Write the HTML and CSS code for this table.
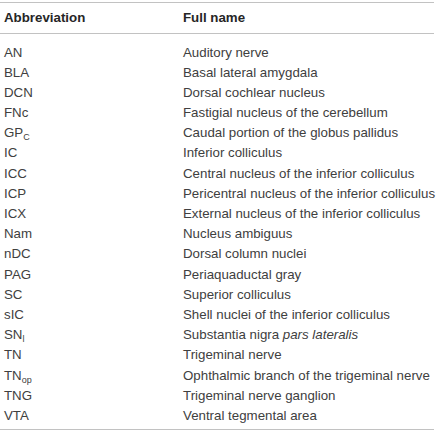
FILE: index.html
```html
<!DOCTYPE html>
<html>
<head>
<meta charset="utf-8">
<link rel="stylesheet" href="styles.css">
</head>
<body>
<div class="tbl">
  <div class="row head"><div class="c1">Abbreviation</div><div class="c2">Full name</div></div>
  <div class="body">
    <div class="row"><div class="c1">AN</div><div class="c2">Auditory nerve</div></div>
    <div class="row"><div class="c1">BLA</div><div class="c2">Basal lateral amygdala</div></div>
    <div class="row"><div class="c1">DCN</div><div class="c2">Dorsal cochlear nucleus</div></div>
    <div class="row"><div class="c1">FNc</div><div class="c2">Fastigial nucleus of the cerebellum</div></div>
    <div class="row"><div class="c1">GP<sub>C</sub></div><div class="c2">Caudal portion of the globus pallidus</div></div>
    <div class="row"><div class="c1">IC</div><div class="c2">Inferior colliculus</div></div>
    <div class="row"><div class="c1">ICC</div><div class="c2">Central nucleus of the inferior colliculus</div></div>
    <div class="row"><div class="c1">ICP</div><div class="c2">Pericentral nucleus of the inferior colliculus</div></div>
    <div class="row"><div class="c1">ICX</div><div class="c2">External nucleus of the inferior colliculus</div></div>
    <div class="row"><div class="c1">Nam</div><div class="c2">Nucleus ambiguus</div></div>
    <div class="row"><div class="c1">nDC</div><div class="c2">Dorsal column nuclei</div></div>
    <div class="row"><div class="c1">PAG</div><div class="c2">Periaquaductal gray</div></div>
    <div class="row"><div class="c1">SC</div><div class="c2">Superior colliculus</div></div>
    <div class="row"><div class="c1">sIC</div><div class="c2">Shell nuclei of the inferior colliculus</div></div>
    <div class="row"><div class="c1">SN<sub>l</sub></div><div class="c2">Substantia nigra <i>pars lateralis</i></div></div>
    <div class="row"><div class="c1">TN</div><div class="c2">Trigeminal nerve</div></div>
    <div class="row"><div class="c1">TN<sub>op</sub></div><div class="c2">Ophthalmic branch of the trigeminal nerve</div></div>
    <div class="row"><div class="c1">TNG</div><div class="c2">Trigeminal nerve ganglion</div></div>
    <div class="row"><div class="c1">VTA</div><div class="c2">Ventral tegmental area</div></div>
  </div>
</div>
</body>
</html>
```

FILE: styles.css
```css
html, body {
  margin: 0;
  padding: 0;
  background: #ffffff;
}
body {
  font-family: "Liberation Sans", Arial, sans-serif;
  font-size: 13.3px;
  color: #404040;
}
.tbl {
  width: 434px;
  margin-top: 2px;
  border-top: 1px solid #c2c2c2;
  border-bottom: 1px solid #c2c2c2;
}
.row {
  display: flex;
  line-height: 20.2px;
  height: 20.2px;
  white-space: nowrap;
}
.c1 {
  flex: none;
  width: 179px;
  padding-left: 4px;
}
.c2 {
  flex: 1;
  min-width: 0;
}
.head {
  height: 30px;
  line-height: 30px;
  font-weight: bold;
  color: #262626;
  border-bottom: 1px solid #c2c2c2;
}
.body {
  padding-top: 8.5px;
  padding-bottom: 2.5px;
}
sub {
  font-size: 9px;
  line-height: 0;
  vertical-align: -3px;
}
```
